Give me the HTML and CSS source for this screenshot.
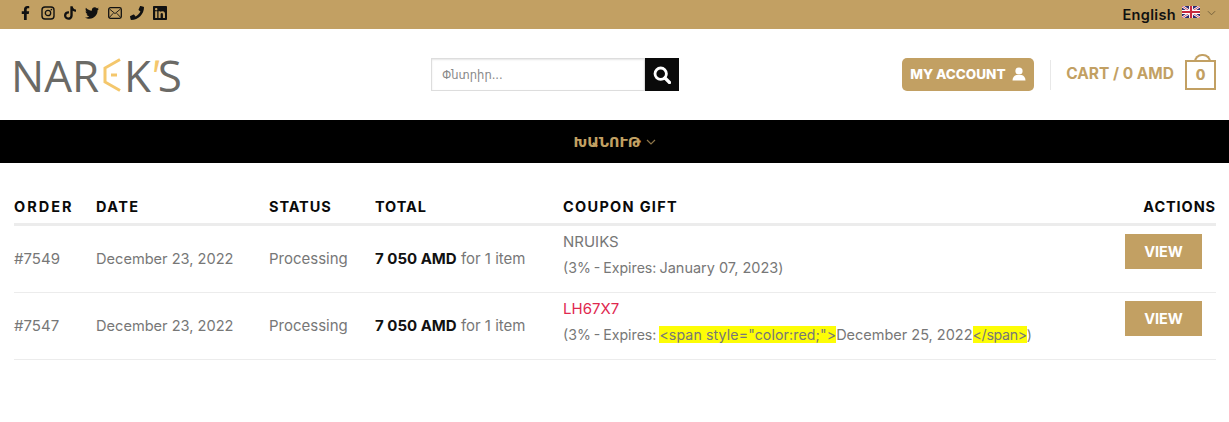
FILE: index.html
```html
<!DOCTYPE html>
<html>

<head>
	<meta charset="utf-8" />
	<title>Narek's: Orders</title>
	<meta name="viewport" content="width=device-width, initial-scale=1" />
	<link rel="stylesheet" href="styles.css">
</head>

<body>
	<div class="topbar">
		<div class="social">
			<svg class="ic ic-fb" viewBox="0 0 320 512"><path d="M279.14 288l14.22-92.66h-88.91v-60.13c0-25.35 12.42-50.06 52.24-50.06h40.42V6.26S260.43 0 225.36 0c-73.22 0-121.08 44.38-121.08 124.72v70.62H22.89V288h81.39v224h100.17V288z"/></svg>
			<svg class="ic ic-insta" viewBox="0 0 14 14"><rect x="1" y="1" width="12" height="12" rx="3" fill="none" stroke="currentColor" stroke-width="1.4"/><circle cx="7" cy="7" r="2.7" fill="none" stroke="currentColor" stroke-width="1.3"/><circle cx="10.4" cy="3.6" r=".8"/></svg>
			<svg class="ic ic-tiktok" viewBox="0 0 448 512"><path d="M448,209.91a210.06,210.06,0,0,1-122.77-39.25V349.38A162.55,162.55,0,1,1,185,188.31V278.2a74.62,74.62,0,1,0,52.23,71.18V0l88,0a121.18,121.18,0,0,0,1.86,22.17h0A122.18,122.18,0,0,0,381,102.39a121.43,121.43,0,0,0,67,20.14Z"/></svg>
			<svg class="ic ic-tw" viewBox="0 0 512 512"><path d="M459.37 151.716c.325 4.548.325 9.097.325 13.645 0 138.72-105.583 298.558-298.558 298.558-59.452 0-114.68-17.219-161.137-47.106 8.447.974 16.568 1.299 25.34 1.299 49.055 0 94.213-16.568 130.274-44.832-46.132-.975-84.792-31.188-98.112-72.772 6.498.974 12.995 1.624 19.818 1.624 9.421 0 18.843-1.3 27.614-3.573-48.081-9.747-84.143-51.98-84.143-102.985v-1.299c13.969 7.797 30.214 12.67 47.431 13.319-28.264-18.843-46.781-51.005-46.781-87.391 0-19.492 5.197-37.36 14.294-52.954 51.655 63.675 129.3 105.258 216.365 109.807-1.624-7.797-2.599-15.918-2.599-24.04 0-57.828 46.782-104.934 104.934-104.934 30.213 0 57.502 12.67 76.67 33.137 23.715-4.548 46.456-13.32 66.599-25.34-7.798 24.366-24.366 44.833-46.132 57.827 21.117-2.273 41.584-8.122 60.426-16.243-14.292 20.791-32.161 39.308-52.628 54.253z"/></svg>
			<svg class="ic ic-mail" viewBox="0 0 14 12"><rect x=".7" y=".7" width="12.6" height="10.6" rx="1.8" fill="none" stroke="currentColor" stroke-width="1.3"/><path d="M1.5 2l5.5 4.6L12.500 2M1.500 10.300l3.800-4.100M12.500 10.300L8.700 6.200" fill="none" stroke="currentColor" stroke-width=".9"/></svg>
			<svg class="ic ic-phone" viewBox="0 0 512 512"><path d="M493.4 24.600l-104-24c-11.300-2.600-22.900 3.300-27.500 13.900l-48 112c-4.200 9.800-1.400 21.300 6.900 28l60.600 49.600c-36 76.700-98.900 140.500-177.200 177.200l-49.600-60.600c-6.800-8.300-18.200-11.100-28-6.900l-112 48C3.900 366.500-2 378.100.6 389.400l24 104C27.100 504.200 36.700 512 48 512c256.100 0 464-207.500 464-464 0-11.200-7.700-20.900-18.600-23.400z"/></svg>
			<svg class="ic ic-in" viewBox="0 32 448 448"><path d="M416 32H31.900C14.300 32 0 46.500 0 64.300v383.400C0 465.500 14.300 480 31.900 480H416c17.600 0 32-14.500 32-32.300V64.300c0-17.800-14.400-32.300-32-32.300zM135.400 416H69V202.200h66.500V416zm-33.200-243c-21.300 0-38.500-17.300-38.500-38.500S80.900 96 102.200 96c21.200 0 38.500 17.300 38.500 38.500 0 21.300-17.200 38.500-38.500 38.500zm282.100 243h-66.400V312c0-24.800-.5-56.700-34.500-56.700-34.600 0-39.900 27-39.900 54.900V416h-66.400V202.200h63.700v29.200h.9c8.900-16.800 30.600-34.500 62.900-34.500 67.200 0 79.700 44.300 79.700 101.900V416z"/></svg>
		</div>
		<div class="lang">
			<span>English</span>
			<svg class="flag" viewBox="0 0 18 12"><rect width="18" height="12" fill="#2b2a6e"/><path d="M0 0l18 12M18 0L0 12" stroke="#fff" stroke-width="2.400"/><path d="M0 0l18 12M18 0L0 12" stroke="#c8283c" stroke-width=".8"/><path d="M9 0v12M0 6h18" stroke="#fff" stroke-width="4"/><path d="M9 0v12M0 6h18" stroke="#c8283c" stroke-width="2.200"/></svg>
			<svg class="chev" viewBox="0 0 10 6"><path d="M1 1l4 4 4-4" fill="none" stroke="currentColor" stroke-width="1"/></svg>
		</div>
	</div>

	<header class="masthead">
		<a class="logo">
			<span class="logo-start">NAR</span>
			<svg class="logo-e" viewBox="0 0 18 34"><path d="M17 1.500L2 10v14l15 8.500" fill="none" stroke="#f4c76c" stroke-width="3"/><path d="M8 17h6" stroke="#f4c76c" stroke-width="3"/></svg>
			<span>K</span><span class="tick">'</span><span>S</span>
		</a>
		<form class="search">
			<input class="search-input" type="text" placeholder="Փնտրիր..." />
			<button class="search-btn" type="button">
				<svg viewBox="0 0 18 18" width="18" height="18"><circle cx="7.700" cy="7.700" r="5.700" fill="none" stroke="#fff" stroke-width="2.800"/><path d="M12 12l4.500 4.500" stroke="#fff" stroke-width="3.200" stroke-linecap="round"/></svg>
			</button>
		</form>
		<div class="account-area">
			<a class="account-btn">MY ACCOUNT
				<svg viewBox="0 0 14 14" width="14" height="14"><circle cx="7" cy="4" r="3.600" fill="#fff"/><path d="M0.500 13.500c0-3.500 2-5 4-5.500h5c2 .5 4 2 4 5.500z" fill="#fff"/></svg>
			</a>
			<span class="divider"></span>
			<a class="cart">CART / 0 AMD</a>
			<span class="cart-box">0</span>
		</div>
	</header>

	<nav class="mainnav">
		<a class="nav-link">ԽԱՆՈՒԹ</a>
		<svg class="nav-chev" viewBox="0 0 10 6"><path d="M1 1l4 4 4-4" fill="none" stroke="currentColor" stroke-width="1.200"/></svg>
	</nav>

	<table class="orders">
		<thead>
			<tr>
				<th class="col-order">ORDER</th>
				<th class="col-date">DATE</th>
				<th class="col-status">STATUS</th>
				<th class="col-total">TOTAL</th>
				<th class="col-coupon">COUPON GIFT</th>
				<th class="col-actions">ACTIONS</th>
			</tr>
		</thead>
		<tbody>
			<tr>
				<td>#7549</td>
				<td class="date">December 23, 2022</td>
				<td>Processing</td>
				<td><b>7 050 AMD</b> for 1 item</td>
				<td class="coupon">
					<div>NRUIKS</div>
					<div class="expires">(3% - Expires: <span class="expiry-date">January 07, 2023</span>)</div>
				</td>
				<td class="col-actions"><a class="view-btn">VIEW</a></td>
			</tr>
			<tr>
				<td>#7547</td>
				<td class="date">December 23, 2022</td>
				<td>Processing</td>
				<td><b>7 050 AMD</b> for 1 item</td>
				<td class="coupon">
					<div class="expired">LH67X7</div>
					<div class="expires">(3% - Expires: <mark>&lt;span style="color:red;"&gt;</mark><span class="expiry-date">December 25, 2022</span><mark>&lt;/span&gt;</mark>)</div>
				</td>
				<td class="col-actions"><a class="view-btn">VIEW</a></td>
			</tr>
		</tbody>
	</table>
</body>

</html>
```

FILE: styles.css
```css
body {
	margin: 0;
	font-family: Inter, "DejaVu Sans", sans-serif;
	color: #777;
	background: #fff;
}

.topbar {
	height: 29px;
	box-sizing: border-box;
	background: #c2a063;
	display: flex;
	align-items: center;
	justify-content: space-between;
	padding: 0 13px 3px 21px;
	color: #111;
}

.social {
	display: flex;
	align-items: center;
}

.ic {
	display: block;
	fill: currentColor;
	height: 14px;
}

.ic-fb { width: 9px; margin-right: 11px; }
.ic-insta { width: 14px; margin-right: 9px; }
.ic-tiktok { width: 12px; margin-right: 9px; }
.ic-tw { width: 14px; margin-right: 9px; }
.ic-mail { width: 14px; margin-right: 8px; }
.ic-phone { width: 14px; margin-right: 9px; }
.ic-in { width: 14px; }

.lang {
	display: flex;
	align-items: center;
	font-size: 14.500px;
	font-weight: 600;
	letter-spacing: .35px;
	padding-top: 2px;
}

.flag {
	width: 18px;
	height: 12px;
	margin: 0 7px 4px 6px;
}

.chev {
	width: 9px;
	height: 6px;
	margin-bottom: 2px;
	color: #6e5b39;
}

.masthead {
	height: 91px;
	display: flex;
	align-items: center;
	padding: 0 13px 0 14px;
}

.logo {
	display: flex;
	flex: none;
	align-items: center;
	width: 167px;
	margin-right: 250px;
	font-family: "Open Sans", sans-serif;
	font-weight: 400;
	font-size: 44px;
	line-height: 1;
	color: #6b6a66;
}

.logo-start {
	margin-left: -3px;
}

.logo-e {
	flex: none;
	width: 18px;
	height: 34px;
	margin: 0 3px 0 4px;
}

.tick {
	color: #f4c76c;
	margin: 0 -1.500px;
	transform: skewX(-10deg);
}

.search {
	display: flex;
	flex: none;
	height: 33px;
	width: 248px;
}

.search-input {
	flex: 1;
	min-width: 0;
	box-sizing: border-box;
	height: 33px;
	border: 1px solid #ddd;
	box-shadow: inset 0 1px 2px rgba(0, 0, 0, .1);
	padding: 0 10px;
	font-family: "DejaVu Sans", sans-serif;
	font-size: 11.500px;
	outline: none;
}

.search-input::placeholder {
	color: #888;
}

.search-btn {
	width: 34px;
	height: 33px;
	border: 0;
	padding: 0;
	background: #0a0a0a;
	display: flex;
	align-items: center;
	justify-content: center;
}

.account-area {
	margin-left: auto;
	display: flex;
	align-items: center;
	font-weight: 800;
}

.account-btn {
	display: flex;
	align-items: center;
	gap: 6px;
	height: 33px;
	width: 132px;
	box-sizing: border-box;
	padding: 0 0 2px 8px;
	background: #c2a063;
	border-radius: 5px;
	color: #fff;
	font-size: 13.500px;
}

.divider {
	width: 1px;
	height: 30px;
	background: #e8e8e8;
	margin: 0 15px 0 16px;
}

.cart {
	color: #c2a063;
	font-size: 15.500px;
	font-weight: 700;
	margin: 0 11px 2px 0;
}

.cart-box {
	position: relative;
	width: 31px;
	height: 30px;
	box-sizing: border-box;
	border: 2px solid #c2a063;
	color: #c2a063;
	font-size: 14px;
	display: flex;
	align-items: center;
	justify-content: center;
}

/* handle of the bag */
.cart-box::before {
	content: "";
	position: absolute;
	left: 7px;
	top: -8px;
	width: 13px;
	height: 6px;
	border: 2px solid #c2a063;
	border-bottom: 0;
	border-radius: 8px 8px 0 0;
}

.mainnav {
	height: 43px;
	background: #000;
	color: #c2a063;
	display: flex;
	align-items: center;
	justify-content: center;
	gap: 5px;
}

.nav-link {
	font-family: "DejaVu Sans", sans-serif;
	font-size: 14.300px;
	font-weight: 700;
}

.nav-chev {
	width: 10px;
	height: 6px;
	color: #8d7549;
}

.orders {
	border-collapse: collapse;
	table-layout: fixed;
	width: 1202px;
	margin: 26px 0 0 14px;
	font-size: 15px;
}

.orders th {
	text-align: left;
	color: #0a0a0a;
	font-size: 14.500px;
	font-weight: 700;
	letter-spacing: .9px;
	height: 34px;
	padding: 0;
	border-bottom: 3px solid #ececec;
}

.orders th.col-order { width: 82px; letter-spacing: 2px; }
.orders th.col-date { width: 173px; letter-spacing: 1.400px; }
.orders th.col-status { width: 106px; }
.orders th.col-total { width: 188px; }
.orders th.col-coupon { letter-spacing: 1.300px; }

.orders th.col-actions,
.orders td.col-actions {
	text-align: right;
	width: 120px;
}

.orders td {
	height: 66px;
	padding: 0;
	line-height: 26px;
	border-bottom: 1px solid #ececec;
	white-space: nowrap;
}

.orders td b {
	color: #111;
	font-weight: 700;
}

.orders td.date {
	font-size: 14.600px;
}

.orders td.coupon {
	padding-bottom: 8px;
	height: 58px;
}

.expires {
	font-size: 14.150px;
	word-spacing: -1px;
}

.expiry-date {
	font-size: 14.500px;
	word-spacing: 0;
}

.expired {
	color: #e0284f;
}

mark {
	background: #fdfd06;
	color: inherit;
	word-spacing: 0;
	letter-spacing: .12px;
}

.expiry-date + mark {
	letter-spacing: -.3px;
}

.orders td.col-actions {
	padding-right: 14px;
}

.view-btn {
	display: inline-block;
	width: 77px;
	height: 35px;
	line-height: 35px;
	text-align: center;
	background: #c2a063;
	color: #fff;
	font-size: 14.500px;
	font-weight: 700;
	margin-bottom: 15px;
}
```
